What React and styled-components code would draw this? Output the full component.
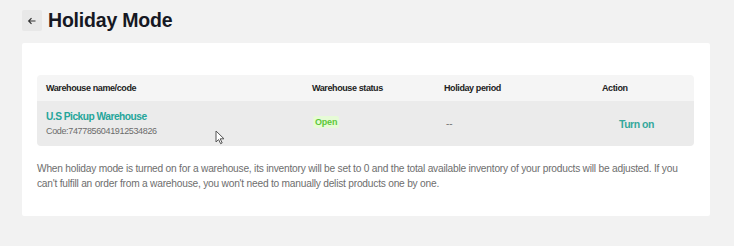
import React from 'react';
import styled, { createGlobalStyle } from 'styled-components';

const GlobalStyle = createGlobalStyle`
    html, body {
        margin: 0;
        padding: 0;
        background: #f2f2f2;
        font-family: 'Liberation Sans', Arial, sans-serif;
    }
`;

const Page = styled.div`
    width: 734px;
    height: 246px;
    box-sizing: border-box;
    padding: 10px 24px 0 22px;
    position: relative;
`;

const Header = styled.div`
    display: flex;
    align-items: center;
    gap: 6px;
    height: 21px;
`;

const BackButton = styled.button`
    width: 20px;
    height: 21px;
    border: none;
    border-radius: 2px;
    background: #e8e8e8;
    padding: 0;
    display: flex;
    align-items: center;
    justify-content: center;
    color: #333;
`;

const Title = styled.h1`
    margin: 0;
    font-size: 19.5px;
    font-weight: 700;
    color: #161823;
    letter-spacing: -0.2px;
`;

const Card = styled.section`
    margin-top: 12px;
    background: #fff;
    border-radius: 2px;
    padding: 32px 16px 25px 15px;
`;

const Table = styled.div`
    border-radius: 4px;
    overflow: hidden;
`;

const Row = styled.div`
    display: grid;
    grid-template-columns: 266px 132px 158px 1fr;
    align-items: center;
    height: ${p => (p.$head ? '26px' : '45px')};
    background: ${p => (p.$head ? '#f5f5f5' : '#ebebeb')};
    padding-left: 9px;
`;

const HeadCell = styled.div`
    font-size: 9px;
    font-weight: 700;
    color: #222;
    letter-spacing: -0.4px;
`;

const Cell = styled.div`
    display: flex;
    flex-direction: column;
    gap: 4px;
    padding-left: ${p => p.$indent || 0}px;
`;

const Name = styled.span`
    font-size: 10.2px;
    font-weight: 700;
    color: #25a59a;
    letter-spacing: -0.5px;
`;

const Code = styled.span`
    font-size: 9px;
    color: #6b6b6b;
    letter-spacing: -0.35px;
`;

const Badge = styled.span`
    align-self: flex-start;
    margin-top: -3px;
    margin-left: 1px;
    padding: 1px 2px;
    font-size: 9px;
    font-weight: 700;
    color: #5cc73b;
    background: #e6fbd6;
    border-radius: 2px;
    letter-spacing: -0.2px;
`;

const Dash = styled.span`
    font-size: 10px;
    color: #777;
    padding-left: 2px;
`;

const ActionLink = styled.a`
    font-size: 10.5px;
    font-weight: 700;
    color: #35a89c;
    letter-spacing: -0.5px;
`;

const Note = styled.p`
    margin: 15px 0 0;
    font-size: 10.2px;
    line-height: 15px;
    color: #6e6e6e;
    letter-spacing: -0.22px;
    max-width: 645px;
`;

const Cursor = styled.svg`
    position: absolute;
    left: 215px;
    top: 130px;
`;

export default function App() {
    return (
        <Page>
            <GlobalStyle />
            <Header>
                <BackButton>
                    <svg width="10" height="10" viewBox="0 0 10 10" fill="none" stroke="#333" strokeWidth="1.2">
                        <path d="M8.5 5H1.8M4.5 2.2L1.7 5l2.8 2.8" />
                    </svg>
                </BackButton>
                <Title>Holiday Mode</Title>
            </Header>
            <Card>
                <Table>
                    <Row $head>
                        <HeadCell>Warehouse name/code</HeadCell>
                        <HeadCell>Warehouse status</HeadCell>
                        <HeadCell>Holiday period</HeadCell>
                        <HeadCell>Action</HeadCell>
                    </Row>
                    <Row>
                        <Cell>
                            <Name>U.S Pickup Warehouse</Name>
                            <Code>Code:7477856041912534826</Code>
                        </Cell>
                        <Cell>
                            <Badge>Open</Badge>
                        </Cell>
                        <Cell>
                            <Dash>--</Dash>
                        </Cell>
                        <Cell $indent={17}>
                            <ActionLink>Turn on</ActionLink>
                        </Cell>
                    </Row>
                </Table>
                <Note>
                    When holiday mode is turned on for a warehouse, its inventory will be set to 0 and the total available
                    inventory of your products will be adjusted. If you can't fulfill an order from a warehouse, you won't
                    need to manually delist products one by one.
                </Note>
            </Card>
            <Cursor width="10" height="15" viewBox="0 0 10 15">
                <path d="M1 1v11l2.6-2.5 2 4.2 1.6-.8-2-4.1H9z" fill="#fff" stroke="#555" strokeWidth="1" strokeLinejoin="round" />
            </Cursor>
        </Page>
    );
}
